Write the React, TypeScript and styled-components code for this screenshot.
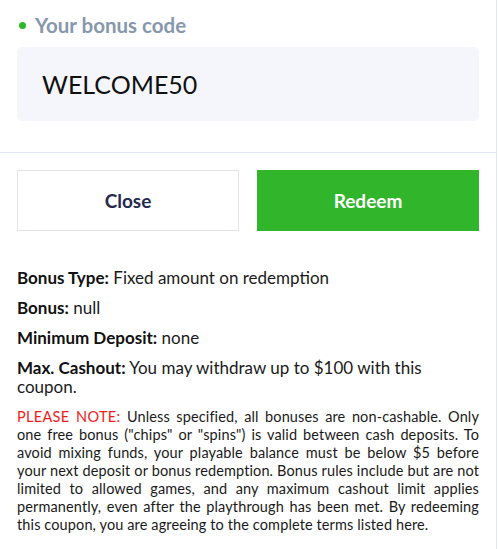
import styled, { createGlobalStyle } from 'styled-components';

const GlobalStyle = createGlobalStyle`
  html, body {
    margin: 0;
    padding: 0;
    background: #ffffff;
  }
  body {
    font-family: Lato, "Open Sans", Arial, sans-serif;
  }
`;

const Panel = styled.div`
  width: 497px;
  min-height: 549px;
  box-sizing: border-box;
  border-right: 1px solid #e3e7f5;
  background: #fff;
`;

const CodeSection = styled.section`
  padding: 12px 17px 31px;
  border-bottom: 1px solid #e3e7f5;
`;

const Label = styled.div`
  display: flex;
  align-items: center;
  gap: 9px;
  padding-left: 2px;
  height: 26px;
  font-size: 20.5px;
  font-weight: 700;
  color: #8797ac;
`;

const Dot = styled.span`
  width: 7px;
  height: 7px;
  border-radius: 50%;
  background: #2fb52a;
  flex: none;
`;

const CodeBox = styled.div`
  margin-top: 9px;
  height: 74px;
  display: flex;
  align-items: center;
  padding-left: 25px;
  border-radius: 5px;
  background: #f4f6fb;
  font-size: 25px;
  color: #111;
`;

const Body = styled.section`
  padding: 17px 17px 0;
`;

const Actions = styled.div`
  display: grid;
  grid-template-columns: 1fr 1fr;
  gap: 18px;
`;

const Button = styled.button<{ $primary?: boolean }>`
  height: 61px;
  font-family: inherit;
  font-size: 19px;
  font-weight: 700;
  cursor: pointer;
  border: ${({ $primary }) => ($primary ? 'none' : '1px solid #e3e5ea')};
  background: ${({ $primary }) => ($primary ? '#31b52b' : '#fff')};
  color: ${({ $primary }) => ($primary ? '#fff' : '#262a4e')};
`;

const Details = styled.div`
  margin-top: 37px;
  display: flex;
  flex-direction: column;
  gap: 11px;
`;

const Detail = styled.p`
  margin: 0;
  font-size: 17px;
  line-height: 19px;
  color: #1a1a1a;

  b {
    font-weight: 700;
    color: #111;
  }
`;

const Note = styled.p`
  margin: 12px 0 0;
  font-size: 14.5px;
  letter-spacing: 0.12px;
  line-height: 18px;
  text-align: justify;
  color: #1a1a1a;

  strong {
    color: #f21b1b;
    font-weight: 400;
    letter-spacing: 0.3px;
  }
`;

const details = [
  { label: 'Bonus Type:', value: 'Fixed amount on redemption' },
  { label: 'Bonus:', value: 'null' },
  { label: 'Minimum Deposit:', value: 'none' },
  { label: 'Max. Cashout:', value: 'You may withdraw up to $100 with this coupon.' },
];

export default function App() {
  return (
    <>
      <GlobalStyle />
      <Panel>
        <CodeSection>
          <Label>
            <Dot />
            Your bonus code
          </Label>
          <CodeBox>WELCOME50</CodeBox>
        </CodeSection>
        <Body>
          <Actions>
            <Button>Close</Button>
            <Button $primary>Redeem</Button>
          </Actions>
          <Details>
            {details.map(d => (
              <Detail key={d.label}>
                <b>{d.label}</b> {d.value}
              </Detail>
            ))}
          </Details>
          <Note>
            <strong>PLEASE NOTE:</strong> Unless specified, all bonuses are non-cashable. Only one
            free bonus ("chips" or "spins") is valid between cash deposits. To avoid mixing funds,
            your playable balance must be below $5 before your next deposit or bonus redemption.
            Bonus rules include but are not limited to allowed games, and any maximum cashout limit
            applies permanently, even after the playthrough has been met. By redeeming this coupon,
            you are agreeing to the complete terms listed here.
          </Note>
        </Body>
      </Panel>
    </>
  );
}
